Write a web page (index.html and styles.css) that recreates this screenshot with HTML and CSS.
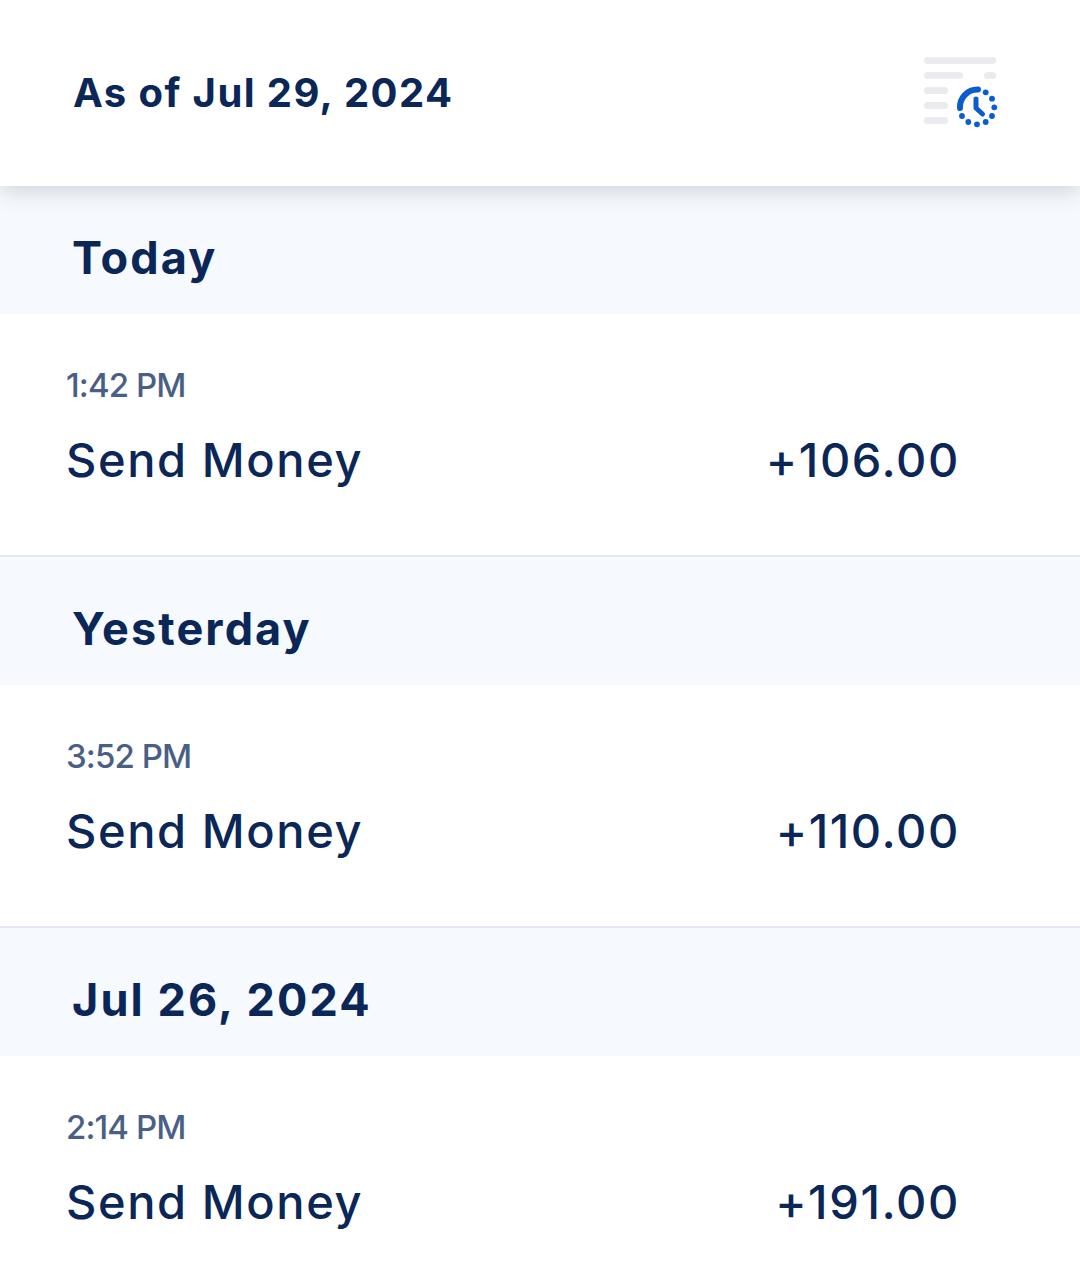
FILE: index.html
```html
<!DOCTYPE html>
<html>
  <head>
    <meta charset="utf-8" />
    <title>Transaction History</title>
    <link rel="stylesheet" href="styles.css">
  </head>
  <body>
    <header class="topbar">
      <h1 class="asOf">As of Jul 29, 2024</h1>
      <svg class="historyIcon" width="80" height="80" viewBox="0 0 80 80">
        <g fill="#e9ebee">
          <rect x="4" y="3" width="72" height="7" rx="3.5" />
          <rect x="4" y="18" width="39" height="7" rx="3.5" />
          <rect x="64" y="18" width="12" height="7" rx="3.5" />
          <rect x="4" y="33" width="24" height="7" rx="3.5" />
          <rect x="4" y="48" width="24" height="7" rx="3.5" />
          <rect x="4" y="63" width="24" height="7" rx="3.5" />
        </g>
        <path d="M40 54 A17.500 17.500 0 0 1 58 35.500" fill="none" stroke="#0b5ccf" stroke-width="6" stroke-linecap="round" />
        <path d="M56 45 V54 L62.500 60" fill="none" stroke="#0b5ccf" stroke-width="5" stroke-linecap="round" stroke-linejoin="round" />
        <g fill="#0b5ccf">
          <circle cx="65.700" cy="38.300" r="2.900" />
          <circle cx="72" cy="44.700" r="2.900" />
          <circle cx="74.300" cy="53.300" r="2.900" />
          <circle cx="72" cy="62" r="2.900" />
          <circle cx="65.700" cy="68" r="2.900" />
          <circle cx="57" cy="70.300" r="2.900" />
          <circle cx="48.300" cy="68" r="2.900" />
          <circle cx="42" cy="62" r="2.900" />
        </g>
      </svg>
    </header>

    <main>
      <section class="group">
        <h2 class="groupTitle">Today</h2>
        <div class="txn">
          <div class="txnTime">1:42 PM</div>
          <div class="txnLine">
            <span>Send Money</span>
            <span>+106.00</span>
          </div>
        </div>
      </section>

      <section class="group">
        <h2 class="groupTitle">Yesterday</h2>
        <div class="txn">
          <div class="txnTime">3:52 PM</div>
          <div class="txnLine">
            <span>Send Money</span>
            <span>+110.00</span>
          </div>
        </div>
      </section>

      <section class="group">
        <h2 class="groupTitle">Jul 26, 2024</h2>
        <div class="txn">
          <div class="txnTime">2:14 PM</div>
          <div class="txnLine">
            <span>Send Money</span>
            <span>+191.00</span>
          </div>
        </div>
      </section>
    </main>
  </body>
</html>
```

FILE: styles.css
```css
html, body {
  margin: 0;
  padding: 0;
}
body {
  width: 1080px;
  height: 1280px;
  overflow: hidden;
  background: #fff;
  color: #0a2757;
  font-family: "Inter", "Lato", sans-serif;
}
.topbar {
  position: relative;
  z-index: 1;
  height: 186px;
  box-sizing: border-box;
  padding: 0 80px 0 73px;
  display: flex;
  align-items: flex-start;
  justify-content: space-between;
  background: #fff;
  box-shadow: 0 4px 22px rgba(40, 50, 70, 0.2);
}
.asOf {
  margin: 67px 0 0;
  font-size: 40px;
  line-height: 52px;
  font-weight: 700;
  letter-spacing: 1.4px;
}
.historyIcon {
  margin-top: 54px;
}
.groupTitle {
  margin: 0;
  height: 128px;
  box-sizing: border-box;
  padding: 43px 0 0 72px;
  background: #f6f9fe;
  font-size: 45px;
  line-height: 58px;
  font-weight: 700;
  letter-spacing: 2.1px;
}
.txn {
  height: 243px;
  box-sizing: border-box;
  padding: 50px 120px 0 66px;
  border-bottom: 2px solid #e3e8f0;
}
.txnTime {
  color: #4a5f85;
  font-size: 33px;
  line-height: 42px;
  font-weight: 500;
  letter-spacing: -0.9px;
}
.txnLine {
  margin-top: 25px;
  display: flex;
  justify-content: space-between;
  font-size: 47px;
  line-height: 58px;
  font-weight: 500;
  letter-spacing: 1.6px;
}
```
